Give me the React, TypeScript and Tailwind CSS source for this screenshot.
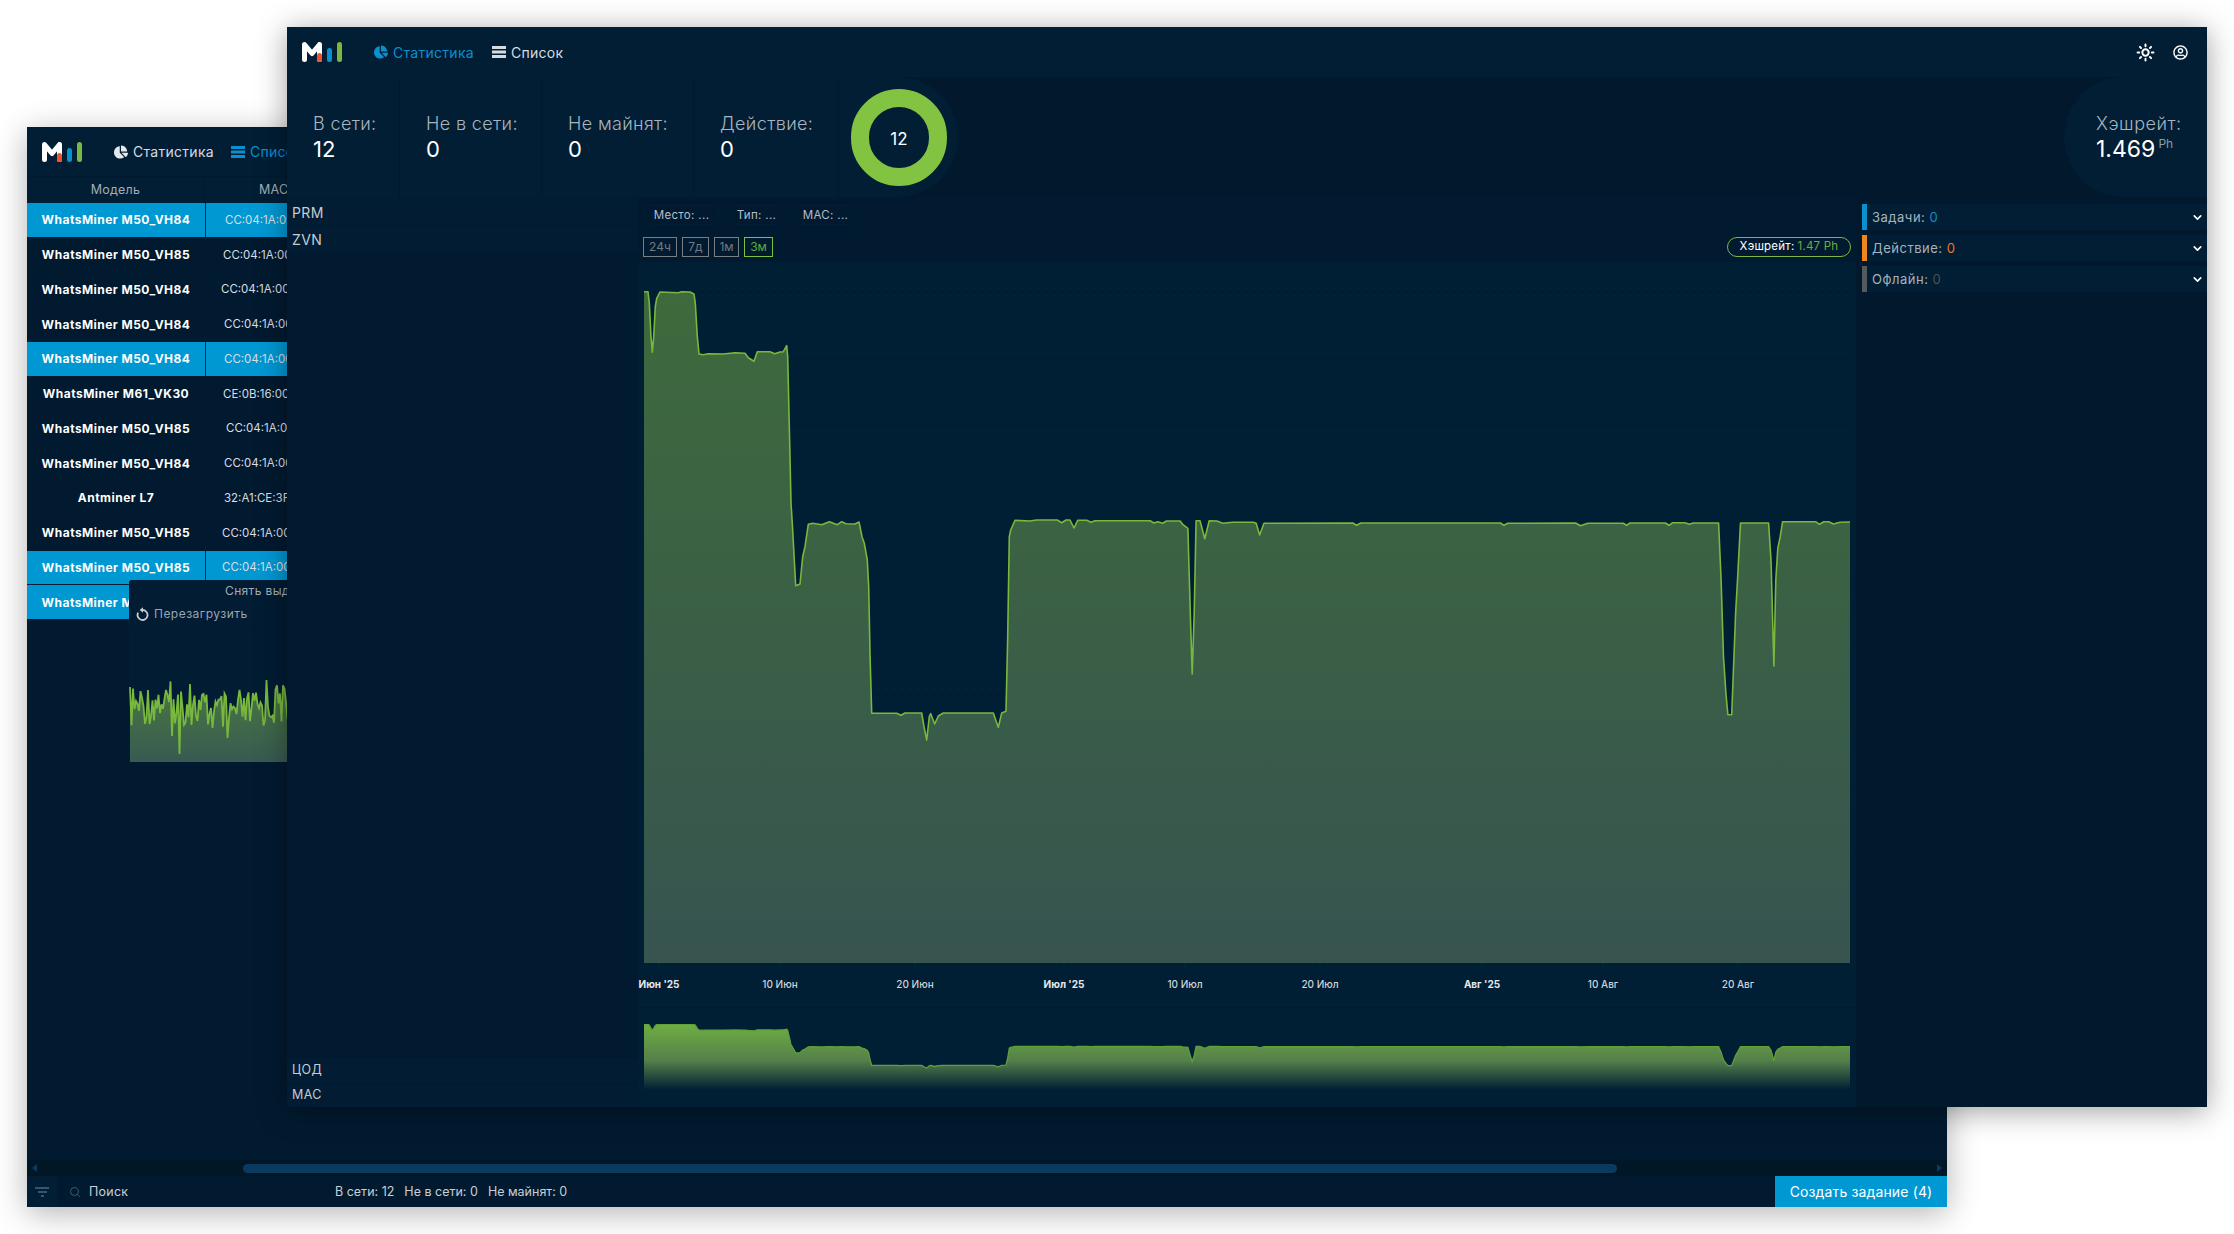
import React from 'react';
import { ChevronDown, Search, Sun } from 'lucide-react';
import { FaChartPie, FaRegUserCircle } from 'react-icons/fa';

// chart points traced from the picture, in page pixels
const LEFT_PART = [[72,65],[84,65],[88,100],[93,200],[97,247],[101,200],[106,110],[110,85],[120,66],[175,68],[185,65],[210,66],[222,72],[226,100],[232,200],[237,252],[250,254],[265,251],[310,252],[345,248],[375,250],[385,263],[402,274],[412,245],[450,245],[464,251],[480,246],[490,245],[500,227],[503,260],[510,560],[513,700],[517,760],[527,947],[540,942],[548,860],[555,830],[565,763],[578,760],[605,764],[628,755],[652,764],[665,755],[678,761],[705,762],[717,756],[726,800],[733,820],[742,870],[746,950],[750,1150],[755,1330],[830,1330],[843,1336],[855,1329],[905,1329],[912,1370],[920,1410],[928,1340],[932,1331],[944,1362],[955,1338],[970,1329],[1120,1329],[1127,1350],[1135,1372],[1145,1329],[1158,1324],[1163,1100],[1168,800],[1172,780],[1185,751],[1230,753],[1250,750],[1312,750],[1325,758],[1338,750],[1350,750],[1362,774],[1373,751],[1400,751],[1413,757],[1425,752],[1500,752]].map(([x, y]) => [620 + x / 3, 270 + y / 3]);

const RIGHT_PART = [[62,122],[70,129],[78,125],[88,130],[96,123],[124,123],[130,134],[140,145],[145,400],[149,582],[153,400],[157,122],[165,122],[175,176],[184,122],[200,123],[212,130],[232,127],[275,127],[281,130],[288,165],[297,130],[480,129],[488,136],[497,129],[785,129],[792,136],[800,130],[940,129],[950,137],[965,130],[1038,130],[1045,136],[1052,129],[1125,129],[1133,136],[1140,128],[1165,128],[1175,133],[1182,129],[1235,129],[1240,300],[1245,530],[1250,640],[1254,704],[1262,704],[1266,550],[1270,400],[1274,300],[1280,129],[1338,129],[1343,240],[1349,558],[1353,300],[1357,205],[1362,170],[1367,125],[1435,125],[1443,133],[1452,125],[1462,125],[1472,132],[1485,127],[1506,126]].map(([x, y]) => [1120 + x / 2.063, 480 + y / 3]);

const POINTS = [...LEFT_PART, ...RIGHT_PART];
const LINE = 'M' + POINTS.map(([x, y]) => `${x.toFixed(1)} ${y.toFixed(1)}`).join('L');
const AREA = `${LINE}L1850 963L644 963Z`;

const noise = (i: number) => {
  const v = Math.sin(i * 12.9898) * 43758.5453;
  return v - Math.floor(v);
};

const SPIKES: Record<number, number> = { 146: 758, 180: 754, 206: 732, 221: 675, 190: 684, 197: 682, 267: 680, 228: 738, 140: 726, 166: 690, 172: 736, 240: 690 };
const NOISE_LINE = 'M' + Array.from({ length: 107 }, (_, i) => {
  const x = 130 + i * 1.5;
  const y = SPIKES[Math.round(x)] ?? 708 + (noise(i) - 0.5) * 42 - Math.sin(i / 14) * 6;
  return `${x} ${y.toFixed(1)}`;
}).join('L');

const ROWS = [
  { model: 'WhatsMiner M50_VH84', mac: 'CC:04:1A:00', pad: 'pl-[19px]', selected: true },
  { model: 'WhatsMiner M50_VH85', mac: 'CC:04:1A:00', pad: 'pl-[17px]', selected: false },
  { model: 'WhatsMiner M50_VH84', mac: 'CC:04:1A:00', pad: 'pl-[15px]', selected: false },
  { model: 'WhatsMiner M50_VH84', mac: 'CC:04:1A:00', pad: 'pl-[18px]', selected: false },
  { model: 'WhatsMiner M50_VH84', mac: 'CC:04:1A:00', pad: 'pl-[18px]', selected: true },
  { model: 'WhatsMiner M61_VK30', mac: 'CE:0B:16:00', pad: 'pl-[17px]', selected: false },
  { model: 'WhatsMiner M50_VH85', mac: 'CC:04:1A:00', pad: 'pl-[20px]', selected: false },
  { model: 'WhatsMiner M50_VH84', mac: 'CC:04:1A:00', pad: 'pl-[18px]', selected: false },
  { model: 'Antminer L7', mac: '32:A1:CE:3F', pad: 'pl-[18px]', selected: false },
  { model: 'WhatsMiner M50_VH85', mac: 'CC:04:1A:00', pad: 'pl-[16px]', selected: false },
  { model: 'WhatsMiner M50_VH85', mac: 'CC:04:1A:00', pad: 'pl-[16px]', selected: true },
  { model: 'WhatsMiner M50_VH84', mac: 'CC:04:1A:00', pad: 'pl-[16px]', selected: true },
];

const STATS = [
  { label: 'В сети:', value: '12', width: 'w-[113px]' },
  { label: 'Не в сети:', value: '0', width: 'w-[142px]' },
  { label: 'Не майнят:', value: '0', width: 'w-[152px]' },
  { label: 'Действие:', value: '0', width: 'w-[145px]' },
];

const AXIS = [
  { x: 659, text: "Июн '25", bold: true },
  { x: 780, text: '10 Июн', bold: false },
  { x: 915, text: '20 Июн', bold: false },
  { x: 1064, text: "Июл '25", bold: true },
  { x: 1185, text: '10 Июл', bold: false },
  { x: 1320, text: '20 Июл', bold: false },
  { x: 1482, text: "Авг '25", bold: true },
  { x: 1603, text: '10 Авг', bold: false },
  { x: 1738, text: '20 Авг', bold: false },
];

const TASKS = [
  { label: 'Задачи:', bar: 'bg-[#0a8fcf]', value: 'text-[#0a8fcf]' },
  { label: 'Действие:', bar: 'bg-[#f0871e]', value: 'text-[#f0771e]' },
  { label: 'Офлайн:', bar: 'bg-[#555a5f]', value: 'text-[#4a5258]' },
];

const Logo = () => (
  <svg width="40" height="20" viewBox="0 0 40 20" fill="none">
    <path d="M2.5 17.5V2.5L10 11.5L17.5 2.5V17.5" stroke="#fff" strokeWidth="5" strokeLinecap="round" strokeLinejoin="round" />
    <path d="M17.5 13.5V17.5" stroke="#f0502a" strokeWidth="5" strokeLinecap="round" />
    <path d="M27.5 8.5V17.5" stroke="#0a8fcf" strokeWidth="5" strokeLinecap="round" />
    <path d="M37.5 2.5V17.5" stroke="#7ab840" strokeWidth="5" strokeLinecap="round" />
  </svg>
);

const ListIcon = ({ className }: { className: string }) => (
  <svg className={className} width="14" height="12" viewBox="0 0 14 12" fill="currentColor">
    <rect y="0" width="14" height="3" />
    <rect y="4.5" width="14" height="3" />
    <rect y="9" width="14" height="3" />
  </svg>
);

const RestartIcon = () => (
  <svg width="13" height="14" viewBox="0 0 13 14" fill="none" className="text-[#c5ccd3]">
    <path d="M6.5 3a5 5 0 1 1-4.4 2.7" stroke="currentColor" strokeWidth="1.8" />
    <path d="M7 .3L3.6 3L7 5.7Z" fill="currentColor" />
  </svg>
);

const BackWindow = () => (
  <div className="absolute left-[27px] top-[127px] w-[1920px] h-[1080px] bg-[#021a30] flex flex-col shadow-[0_6px_30px_rgba(0,0,0,0.3)]">
    {/* Header */}
    <div className="h-[50px] shrink-0 bg-[#011e35] flex items-center pl-[15px] border-b border-[#01192e]">
      <Logo />
      <div className="ml-[32px] flex items-center gap-[5px] text-[14px] tracking-[0.02em] text-[#d5dbe0]">
        <FaChartPie className="w-[14px] h-[14px] text-[#e5e8eb]" />
        <span>Статистика</span>
      </div>
      <div className="ml-[17px] flex items-center gap-[5px] text-[14px] tracking-[0.02em] text-[#0a8fcf]">
        <ListIcon className="text-[#0a8fcf]" />
        <span>Список</span>
      </div>
    </div>

    {/* Table */}
    <div className="h-[26px] shrink-0 flex bg-[#011e35] text-[12.5px] tracking-[0.02em] text-[#a3adb7]">
      <div className="w-[178px] pt-[1px] flex items-center justify-center border-r border-[#01192e]">Модель</div>
      <div className="pt-[1px] flex items-center pl-[54px]">MAC</div>
    </div>
    <div className="flex-1 relative">
      {ROWS.map((row, i) => (
        <div key={i} className="h-[34.75px] flex items-center border-b border-[#011a30] text-white">
          <div className={`w-[178px] h-full pt-[1px] flex items-center justify-center text-[12px] font-bold tracking-[0.04em] ${row.selected ? 'bg-[#0098d3]' : ''}`}>
            {row.model}
          </div>
          <div className={`w-[1px] h-full ${row.selected ? 'bg-[#02294a]' : 'bg-[#011c33]'}`} />
          <div className={`w-[240px] h-full pt-[1px] flex items-center text-[11.5px] text-[#d8dee3] ${row.pad} ${row.selected ? 'bg-[#0098d3]' : ''}`}>
            {row.mac}
          </div>
        </div>
      ))}

      {/* Context menu */}
      <div className="absolute left-[102px] top-[377px] w-[240px] h-[182px] bg-[#011c33] rounded-tl-[3px] flex flex-col">
        <div className="h-[22px] flex items-center pl-[96px] text-[12px] tracking-[0.03em] text-[#a3adb7]">Снять выделение</div>
        <div className="h-[24px] flex items-center pl-[7px] gap-[5px] text-[12px] tracking-[0.04em] text-[#9aa5af] border-b border-[#011a30]">
          <RestartIcon />
          <span>Перезагрузить</span>
        </div>
        <svg className="mt-auto" width="240" height="136" viewBox="129 626 240 136">
          <defs>
            <linearGradient id="noiseFill" x1="0" y1="0" x2="0" y2="1">
              <stop offset="0" stopColor="#4a7a40" />
              <stop offset="1" stopColor="#385a52" />
            </linearGradient>
          </defs>
          <path d={`${NOISE_LINE}L290 762L130 762Z`} fill="url(#noiseFill)" />
          <path d={NOISE_LINE} fill="none" stroke="#79b83c" strokeWidth="1.8" />
        </svg>
      </div>
    </div>

    {/* Scrollbar */}
    <div className="h-[16px] shrink-0 flex items-center bg-[#021726] px-[5px]">
      <div className="w-0 h-0 border-y-[4px] border-y-transparent border-r-[5px] border-r-[#0a3a60]" />
      <div className="w-[206px]" />
      <div className="flex-1 h-[9px] rounded-full bg-[#0a3a60]" />
      <div className="w-[320px]" />
      <div className="w-0 h-0 border-y-[4px] border-y-transparent border-l-[5px] border-l-[#0a3a60]" />
    </div>

    {/* Footer */}
    <div className="h-[31px] shrink-0 flex items-center text-[12.5px] text-[#c8cfd6]">
      <div className="w-[30px] h-full bg-[#011e35] flex flex-col items-center justify-center gap-[2px]">
        <div className="w-[14px] h-[2px] bg-[#35566e]" />
        <div className="w-[9px] h-[2px] bg-[#35566e]" />
        <div className="w-[3px] h-[2px] bg-[#35566e]" />
      </div>
      <Search size={12} className="ml-[12px] text-[#3f5a70]" />
      <span className="ml-[8px] w-[246px] pt-[1px] tracking-[0.02em]">Поиск</span>
      <div className="flex gap-[10px] pt-[1px]">
        <span>В сети: 12</span>
        <span>Не в сети: 0</span>
        <span>Не майнят: 0</span>
      </div>
      <button className="ml-auto w-[172px] h-full bg-[#0098d3] text-white text-[14px] tracking-[0.01em]">Создать задание (4)</button>
    </div>
  </div>
);

const FrontWindow = () => (
  <div className="absolute left-[287px] top-[27px] w-[1920px] h-[1080px] bg-[#011a30] flex flex-col shadow-[0_4px_28px_rgba(0,0,0,0.38)]">
    {/* Header */}
    <div className="h-[50px] shrink-0 bg-[#011e35] flex items-center pl-[15px] pr-[19px]">
      <Logo />
      <div className="ml-[32px] flex items-center gap-[5px] text-[14px] tracking-[0.02em] text-[#0a8fcf]">
        <FaChartPie className="w-[14px] h-[14px]" />
        <span>Статистика</span>
      </div>
      <div className="ml-[18px] flex items-center gap-[5px] text-[14px] tracking-[0.02em] text-[#d5dbe0]">
        <ListIcon className="text-[#d5dbe0]" />
        <span>Список</span>
      </div>
      <Sun size={19} strokeWidth={2.5} className="ml-auto text-white" />
      <FaRegUserCircle className="ml-[18px] w-[15px] h-[15px] text-white" />
    </div>

    {/* Stats */}
    <div className="h-[120px] shrink-0 flex items-stretch bg-[#01182d]">
      {STATS.map(s => (
        <div key={s.label} className={`${s.width} bg-[#011e35] border-r border-[#01182d] pl-[26px] flex flex-col justify-center`}>
          <span className="text-[18px] leading-[24px] font-light tracking-[0.02em] text-[#a9b4be]">{s.label}</span>
          <span className="text-[22px] leading-[26px] text-white">{s.value}</span>
        </div>
      ))}
      <div className="bg-[#011e35] rounded-r-[60px] pl-[12px] pr-[11px] flex items-center">
        <div className="w-[96px] h-[97px] pt-[6px] rounded-full border-[18px] border-[#82c341] flex items-center justify-center text-[17px] text-white">12</div>
      </div>
      <div className="ml-auto w-[143px] bg-[#011e35] rounded-l-[60px] pl-[32px] flex flex-col justify-center">
        <span className="text-[18px] leading-[24px] font-light tracking-[0.03em] text-[#a9b4be]">Хэшрейт:</span>
        <span className="text-[23px] leading-[26px] text-white">1.469<sup className="ml-[3px] text-[12px] top-[-9px] text-[#8f9ba6]">Ph</sup></span>
      </div>
    </div>

    {/* Body */}
    <div className="flex-1 flex min-h-0">
      <div className="w-[351px] shrink-0 flex flex-col text-[14px] tracking-[0.03em] text-[#c5ccd3]">
        <div className="h-[29px] pt-[2px] bg-[#011c33] border-b border-[#01192e] flex items-center pl-[5px]">PRM</div>
        <div className="h-[26px] pt-[1px] bg-[#011c33] flex items-center pl-[5px]">ZVN</div>
        <div className="mt-auto h-[26px] pb-[1px] bg-[#011c33] border-t border-[#01192e] flex items-center pl-[5px] text-[12.5px]">ЦОД</div>
        <div className="h-[24px] pb-[1px] bg-[#011c33] border-t border-[#01192e] flex items-center pl-[5px] text-[12.5px]">MAC</div>
      </div>

      <div className="w-[1218px] shrink-0 flex flex-col">
        <div className="h-[65px] shrink-0 pt-[8px] px-[5px] flex flex-col gap-[12px]">
          <div className="flex gap-[7px] text-[11.5px] tracking-[0.03em] text-[#b6bfc8]">
            <div className="w-[77px] h-[20px] pt-[2px] rounded-full bg-[#011a30] border border-[#011f36] flex items-center justify-center">Место: ...</div>
            <div className="w-[59px] h-[20px] pt-[2px] rounded-full bg-[#011a30] border border-[#011f36] flex items-center justify-center">Тип: ...</div>
            <div className="w-[65px] h-[20px] pt-[2px] rounded-full bg-[#011a30] border border-[#011f36] flex items-center justify-center">MAC: ...</div>
          </div>
          <div className="flex items-center gap-[5px] text-[12px] text-[#6f7a83]">
            <div className="w-[34px] h-[20px] border border-[#787f85] flex items-center justify-center">24ч</div>
            <div className="w-[27px] h-[20px] border border-[#787f85] flex items-center justify-center">7д</div>
            <div className="w-[25px] h-[20px] border border-[#787f85] flex items-center justify-center">1м</div>
            <div className="w-[29px] h-[20px] border border-[#7cc23f] text-[#62a838] flex items-center justify-center">3м</div>
            <div className="ml-auto w-[124px] h-[20px] rounded-full border border-[#7ab840] flex items-center justify-center text-[11.5px] tracking-[0.02em] text-white">
              Хэшрейт:<span className="ml-[3px] text-[#6cae3a]">1.47 Ph</span>
            </div>
          </div>
        </div>

        <div className="flex-1 bg-[#001e34] flex flex-col">
          <div className="h-[30px] shrink-0" />
          <svg className="ml-[6px] shrink-0 overflow-visible" width="1206" height="671" viewBox="644 292 1206 671">
            <defs>
              <linearGradient id="mainFill" x1="0" y1="0" x2="0" y2="1">
                <stop offset="0" stopColor="#3e6a3c" />
                <stop offset="1" stopColor="#375450" />
              </linearGradient>
            </defs>
            {[0, 1, 2, 3, 4, 5, 6, 7, 8, 9].map(i => (
              <line key={i} x1="644" x2="1850" y1={292 + i * 67.1} y2={292 + i * 67.1} stroke="#01192f" strokeDasharray="4 4" />
            ))}
            <path d={AREA} fill="url(#mainFill)" />
            <path d={LINE} fill="none" stroke="#79b83c" strokeWidth="1.6" strokeLinejoin="round" />
          </svg>
          <svg className="ml-[6px] shrink-0 overflow-visible" width="1206" height="44" viewBox="644 963 1206 44">
            {AXIS.map(a => (
              <g key={a.x}>
                <line x1={a.x} x2={a.x} y1="963" y2="968" stroke="#01293f" />
                <text x={a.x} y="988" textAnchor="middle" fontSize="10" fontWeight={a.bold ? 700 : 500} fill={a.bold ? '#e5e9ec' : '#ccd3d9'}>{a.text}</text>
              </g>
            ))}
          </svg>
          <div className="border-t border-[#011a2e] pt-[16px] pl-[6px]">
            <svg width="1206" height="66" viewBox="644 292 1206 671" preserveAspectRatio="none">
              <defs>
                <linearGradient id="miniFill" x1="0" y1="0" x2="0" y2="1">
                  <stop offset="0" stopColor="#6fae42" />
                  <stop offset="0.55" stopColor="#55804a" />
                  <stop offset="1" stopColor="#001e34" />
                </linearGradient>
              </defs>
              <path d={AREA} fill="url(#miniFill)" />
              <path d={LINE} fill="none" stroke="#5f9f38" strokeWidth="1.3" vectorEffect="non-scaling-stroke" />
            </svg>
          </div>
        </div>
      </div>

      <div className="flex-1 bg-[#01182d] pt-[7px] pl-[6px] flex flex-col gap-[5px] text-[13px] tracking-[0.04em] text-[#a7b2bd]">
        {TASKS.map(t => (
          <div key={t.label} className="h-[26px] pt-[1px] bg-[#011e35] flex items-center">
            <div className={`w-[5px] -mt-[1px] h-[26px] ${t.bar}`} />
            <span className="ml-[5px]">{t.label}</span>
            <span className={`ml-[4px] ${t.value}`}>0</span>
            <ChevronDown size={13} strokeWidth={3} className="ml-auto mr-[3px] text-white" />
          </div>
        ))}
      </div>
    </div>
  </div>
);

export default function App() {
  return (
    <div className="relative w-[2234px] h-[1234px] bg-white overflow-hidden font-[Inter,sans-serif]">
      <BackWindow />
      <FrontWindow />
    </div>
  );
}
